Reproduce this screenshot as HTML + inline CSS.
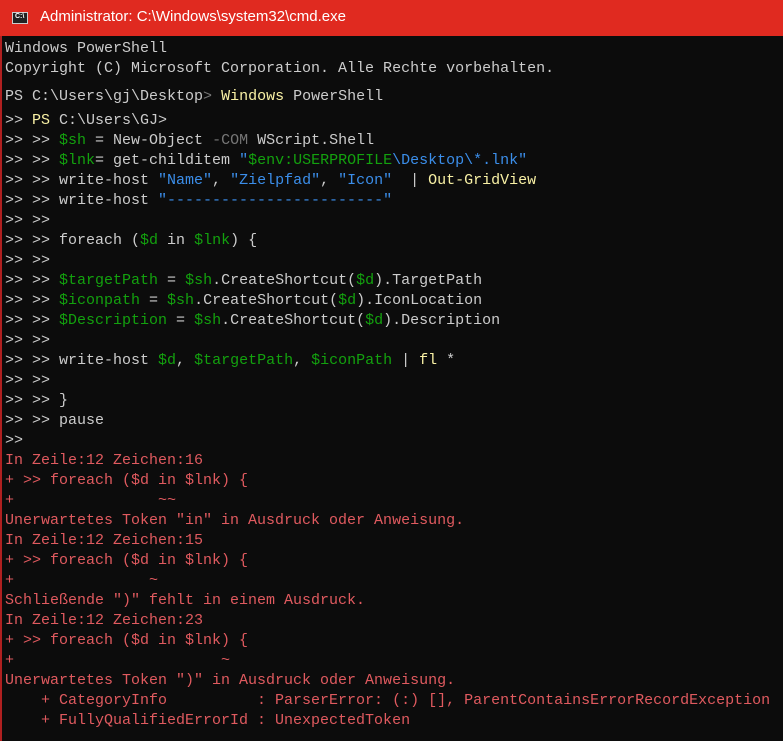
<!DOCTYPE html>
<html><head><meta charset="utf-8"><style>
html,body{margin:0;padding:0;width:783px;height:741px;overflow:hidden;background:#0c0c0c}
.title{position:absolute;left:0;top:0;width:783px;height:36px;background:#e02a20}
.title .t{position:absolute;left:40px;top:8px;color:#fff;font:15px "Liberation Sans",sans-serif}
.icon{position:absolute;left:12px;top:12px;width:16px;height:12px;background:#222;border:1px solid #ccc;box-sizing:border-box}
.icon span{position:absolute;left:2px;top:0px;color:#fff;font:bold 7px "Liberation Sans",sans-serif}
.lb{position:absolute;left:0;top:36px;width:2px;height:705px;background:#b02020}
pre{position:absolute;left:5px;margin:0;font:15px/20px "Liberation Mono",monospace;color:#cccccc;white-space:pre}
.y{color:#f9f1a5}.g{color:#13a10e}.b{color:#3b8eea}.d{color:#767676}.r{color:#e05a5f}
</style></head><body>
<div class="title"><div class="icon"><span>C:\</span></div><div class="t">Administrator: C:\Windows\system32\cmd.exe</div></div>
<div class="lb"></div>
<pre style="top:39px">Windows PowerShell
Copyright (C) Microsoft Corporation. Alle Rechte vorbehalten.</pre>
<pre style="top:87px">PS C:\Users\gj\Desktop<span class="d">&gt;</span> <span class="y">Windows</span> PowerShell</pre>
<pre style="top:111px">&gt;&gt; <span class="y">PS</span> C:\Users\GJ&gt;
&gt;&gt; &gt;&gt; <span class="g">$sh</span> = New-Object <span class="d">-COM</span> WScript.Shell
&gt;&gt; &gt;&gt; <span class="g">$lnk</span>= get-childitem <span class="b">"</span><span class="g">$env:USERPROFILE</span><span class="b">\Desktop\*.lnk"</span>
&gt;&gt; &gt;&gt; write-host <span class="b">"Name"</span>, <span class="b">"Zielpfad"</span>, <span class="b">"Icon"</span>  | <span class="y">Out-GridView</span>
&gt;&gt; &gt;&gt; write-host <span class="b">"------------------------"</span>
&gt;&gt; &gt;&gt;
&gt;&gt; &gt;&gt; foreach (<span class="g">$d</span> in <span class="g">$lnk</span>) {
&gt;&gt; &gt;&gt;
&gt;&gt; &gt;&gt; <span class="g">$targetPath</span> = <span class="g">$sh</span>.CreateShortcut(<span class="g">$d</span>).TargetPath
&gt;&gt; &gt;&gt; <span class="g">$iconpath</span> = <span class="g">$sh</span>.CreateShortcut(<span class="g">$d</span>).IconLocation
&gt;&gt; &gt;&gt; <span class="g">$Description</span> = <span class="g">$sh</span>.CreateShortcut(<span class="g">$d</span>).Description
&gt;&gt; &gt;&gt;
&gt;&gt; &gt;&gt; write-host <span class="g">$d</span>, <span class="g">$targetPath</span>, <span class="g">$iconPath</span> | <span class="y">fl</span> *
&gt;&gt; &gt;&gt;
&gt;&gt; &gt;&gt; }
&gt;&gt; &gt;&gt; pause
&gt;&gt;
<span class="r">In Zeile:12 Zeichen:16
+ &gt;&gt; foreach ($d in $lnk) {
+                ~~
Unerwartetes Token "in" in Ausdruck oder Anweisung.
In Zeile:12 Zeichen:15
+ &gt;&gt; foreach ($d in $lnk) {
+               ~
Schließende ")" fehlt in einem Ausdruck.
In Zeile:12 Zeichen:23
+ &gt;&gt; foreach ($d in $lnk) {
+                       ~
Unerwartetes Token ")" in Ausdruck oder Anweisung.
    + CategoryInfo          : ParserError: (:) [], ParentContainsErrorRecordException
    + FullyQualifiedErrorId : UnexpectedToken</span></pre>
</body></html>
